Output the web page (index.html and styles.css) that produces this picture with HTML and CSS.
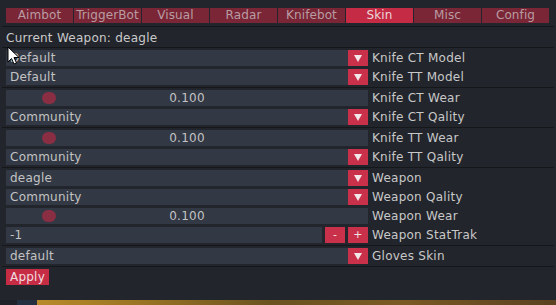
FILE: index.html
```html
<!DOCTYPE html>
<html lang="en">
<head>
    <meta charset="UTF-8">
    <meta name="viewport" content="width=device-width, initial-scale=1.0">
    <title>Skin Changer</title>
    <link rel="stylesheet" href="styles.css">
</head>
<body>
    <div class="window">
        <div class="tabs">
            <div class="tab">Aimbot</div>
            <div class="tab">TriggerBot</div>
            <div class="tab">Visual</div>
            <div class="tab">Radar</div>
            <div class="tab">Knifebot</div>
            <div class="tab active">Skin</div>
            <div class="tab">Misc</div>
            <div class="tab">Config</div>
        </div>
        <div class="line top"></div>
        <div class="current">Current Weapon: deagle</div>
        <div class="line head"></div>

        <div class="row">
            <div class="field">Default</div>
            <div class="btn arrow"><svg width="8" height="7" viewBox="0 0 8 7"><path d="M0 0h8L4 7z" fill="#f2e8ea"/></svg></div>
            <div class="label">Knife CT Model</div>
        </div>
        <div class="row">
            <div class="field">Default</div>
            <div class="btn arrow"><svg width="8" height="7" viewBox="0 0 8 7"><path d="M0 0h8L4 7z" fill="#f2e8ea"/></svg></div>
            <div class="label">Knife TT Model</div>
        </div>
        <div class="line"></div>

        <div class="row">
            <div class="field slider"><span class="grab"></span>0.100</div>
            <div class="label">Knife CT Wear</div>
        </div>
        <div class="row">
            <div class="field">Community</div>
            <div class="btn arrow"><svg width="8" height="7" viewBox="0 0 8 7"><path d="M0 0h8L4 7z" fill="#f2e8ea"/></svg></div>
            <div class="label">Knife CT Qality</div>
        </div>
        <div class="line"></div>

        <div class="row">
            <div class="field slider"><span class="grab"></span>0.100</div>
            <div class="label">Knife TT Wear</div>
        </div>
        <div class="row">
            <div class="field">Community</div>
            <div class="btn arrow"><svg width="8" height="7" viewBox="0 0 8 7"><path d="M0 0h8L4 7z" fill="#f2e8ea"/></svg></div>
            <div class="label">Knife TT Qality</div>
        </div>
        <div class="line"></div>

        <div class="row">
            <div class="field">deagle</div>
            <div class="btn arrow"><svg width="8" height="7" viewBox="0 0 8 7"><path d="M0 0h8L4 7z" fill="#f2e8ea"/></svg></div>
            <div class="label">Weapon</div>
        </div>
        <div class="row">
            <div class="field">Community</div>
            <div class="btn arrow"><svg width="8" height="7" viewBox="0 0 8 7"><path d="M0 0h8L4 7z" fill="#f2e8ea"/></svg></div>
            <div class="label">Weapon Qality</div>
        </div>
        <div class="row">
            <div class="field slider"><span class="grab"></span>0.100</div>
            <div class="label">Weapon Wear</div>
        </div>
        <div class="row">
            <div class="field input">-1</div>
            <div class="btn step">-</div>
            <div class="btn step">+</div>
            <div class="label">Weapon StatTrak</div>
        </div>
        <div class="line"></div>

        <div class="row">
            <div class="field">default</div>
            <div class="btn arrow"><svg width="8" height="7" viewBox="0 0 8 7"><path d="M0 0h8L4 7z" fill="#f2e8ea"/></svg></div>
            <div class="label">Gloves Skin</div>
        </div>
        <div class="line"></div>

        <div class="apply">Apply</div>
    </div>

    <div class="scene">
        <div class="scene-dark"></div>
        <div class="scene-gold"></div>
    </div>

    <svg class="cursor" width="13" height="20" viewBox="0 0 13 20">
        <path d="M1 1v15l3.5-3.5 2.5 5.5 2.5-1-2.5-5.5h5z" fill="#ffffff" stroke="#000000" stroke-width="1"/>
    </svg>
</body>
</html>
```

FILE: styles.css
```css
/* ImGui-like skin window */
body {
    margin: 0;
    width: 556px;
    height: 305px;
    overflow: hidden;
    background-color: #1e2128;
    font-family: 'DejaVu Sans', sans-serif;
    font-size: 12px;
    letter-spacing: 0.25px;
    color: #c6c6c6;
    position: relative;
}

.window {
    height: 300px;
    background-color: #22252c;
    padding-top: 8px;
    box-sizing: border-box;
}

.tabs {
    display: flex;
    gap: 1px;
    margin-left: 6px;
    width: 543px;
    height: 15px;
}

.tab {
    flex: 1;
    background-color: #7a2636;
    color: #b99ca2;
    text-align: center;
    line-height: 15px;
    letter-spacing: 0.1px;
}

.tab.active {
    background-color: #c52b44;
    color: #ecd6da;
}

.line {
    height: 1px;
    margin: 2px 2px -1px 2px;
    width: 552px;
    background-color: #15171b;
}

.line.top {
    margin: 3px 2px 0 2px;
}

.line.head {
    margin: 1px 2px -1px 2px;
}

.current {
    height: 16px;
    line-height: 16px;
    margin-top: 3px;
    padding-left: 6px;
    color: #cacaca;
}

.row {
    display: flex;
    height: 16px;
    margin: 3px 0 0 6px;
    line-height: 16px;
}

.field {
    width: 342px;
    background-color: #323844;
    padding-left: 4px;
    box-sizing: border-box;
    color: #c3c3c3;
}

.field.slider {
    width: 362px;
    position: relative;
    text-align: center;
    padding-left: 0;
}

.field.input {
    width: 316px;
}

.grab {
    position: absolute;
    left: 36px;
    top: 2px;
    width: 14px;
    height: 12px;
    border-radius: 6px;
    background-color: #8a2e44;
}

.btn {
    width: 20px;
    background-color: #c9304a;
    display: flex;
    align-items: center;
    justify-content: center;
    color: #f0e4e6;
}

.step {
    margin-left: 3px;
    font-size: 11px;
}

.label {
    margin-left: 4px;
    color: #c8c8c8;
}

.apply {
    display: inline-block;
    margin: 3px 0 0 6px;
    height: 16px;
    line-height: 16px;
    width: 43px;
    text-align: center;
    background-color: #c72c45;
    color: #f0dde0;
    font-size: 12px;
}

.scene {
    display: flex;
    height: 5px;
}

.scene-dark {
    width: 37px;
    background: linear-gradient(90deg, #1e2128 0 17px, #223040 17px);
}

.scene-gold {
    flex: 1;
    background: linear-gradient(90deg, #b88a2a, #9a7424 20%, #6a5220 45%, #7a5a24 70%, #5a4020);
}

.cursor {
    position: absolute;
    left: 7px;
    top: 46px;
}
```
